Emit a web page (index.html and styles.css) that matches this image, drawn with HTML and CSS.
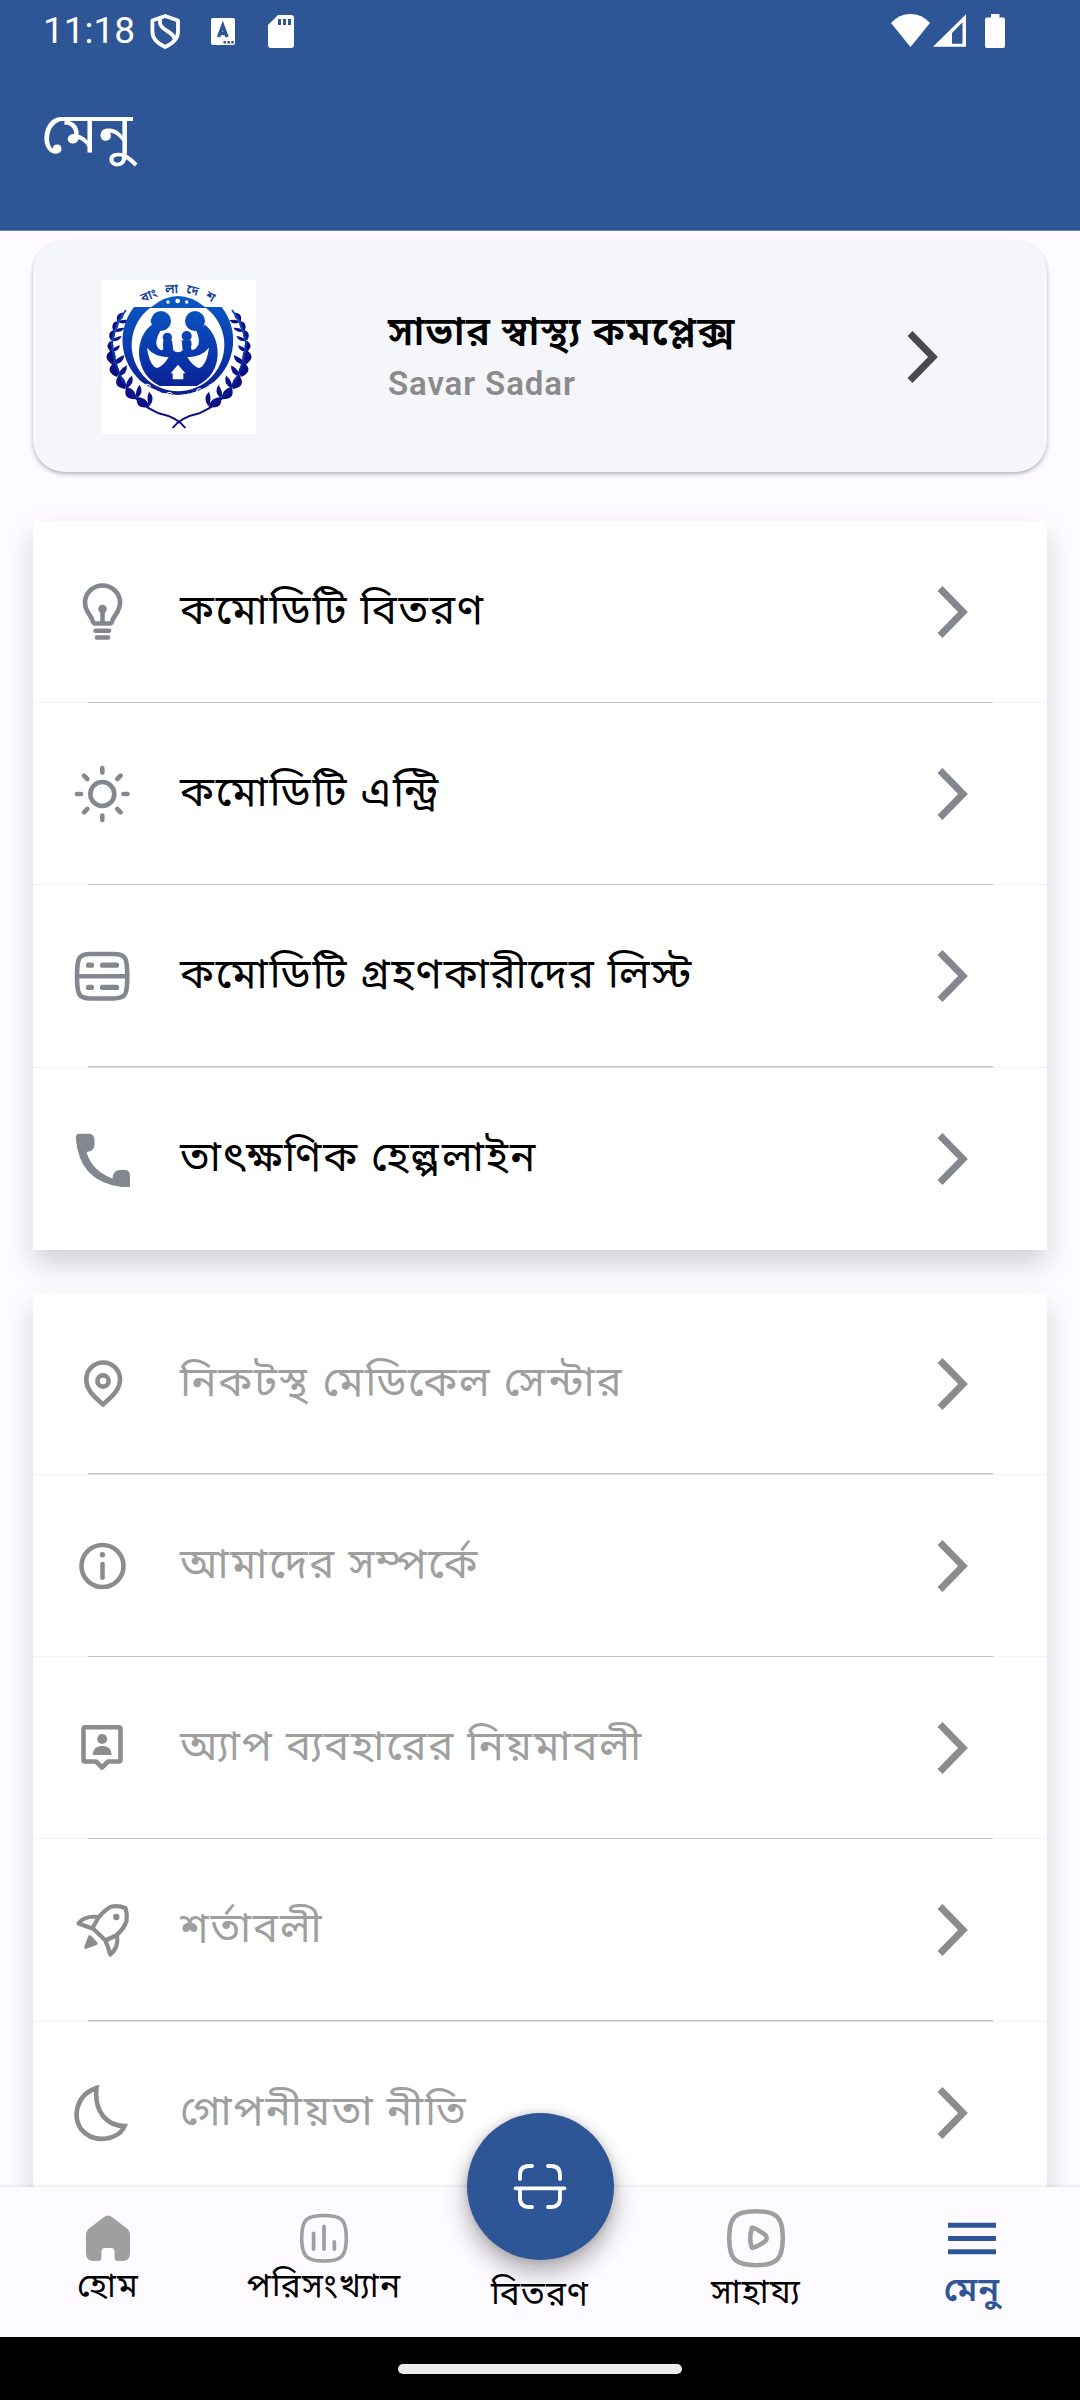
FILE: index.html
```html
<!DOCTYPE html>
<html lang="bn">
<head>
<meta charset="utf-8">
<title>মেনু</title>
<link rel="stylesheet" href="styles.css">
</head>
<body>
<div class="screen">
  <header class="top">
    <div class="status">
      <span class="clock">11:18</span>
      <svg class="status-left" width="150" height="40" viewBox="148 12 150 40">
        <path d="M165.200 16l12.800 4.500v11c0 7-6 12.500-12.800 15.500c-6.800-3-12.800-8.500-12.800-15.500v-11z" fill="none" stroke="#fff" stroke-width="3.800" stroke-linejoin="round"/>
        <path d="M160 19v4c0 7 14.500 9 14.500 16.500" fill="none" stroke="#fff" stroke-width="3.800"/>
        <rect x="211" y="18" width="24" height="27" rx="2" fill="#fff"/>
        <path d="M218.500 37l4.300-11.500l4.300 11.500M220 33.500h6" fill="none" stroke="#2e5596" stroke-width="3.400"/>
        <path d="M223.500 41h2.400v2.400h-2.400zM227.500 41h2.400v2.400h-2.400zM231.300 41h2.400v2.400h-2.400z" fill="#2e5596"/>
        <path d="M278 15h13a3 3 0 0 1 3 3v27a3 3 0 0 1-3 3h-20a3 3 0 0 1-3-3v-20z" fill="#fff"/>
        <path d="M278 19h3v6h-3zM283 19h3v6h-3zM288 19h3v6h-3z" fill="#2e5596"/>
      </svg>
      <svg class="status-right" width="120" height="40" viewBox="888 12 120 40">
        <path d="M891 23q8-9 19.500-9t19.500 9l-19.500 24z" fill="#fff"/>
        <path fill-rule="evenodd" d="M966 14.300v32.400h-33zM962.500 22.300l-10.500 10.700v10.700h10.500z" fill="#fff"/>
        <path d="M991 14h8.500v3.500h3.500a2 2 0 0 1 2 2v26.500a2 2 0 0 1-2 2h-16a2 2 0 0 1-2-2v-26.500a2 2 0 0 1 2-2h4z" fill="#fff"/>
      </svg>
    </div>
    <h1 class="page-title">মেনু</h1>
  </header>

  <main class="content">
    <section class="profile">
      <svg class="emblem" viewBox="36 30 462 462">
        <defs>
          <linearGradient id="ink" gradientUnits="userSpaceOnUse" x1="0" y1="50" x2="0" y2="440">
            <stop offset="0" stop-color="#0a5fc8"/><stop offset=".5" stop-color="#0a3aae"/><stop offset="1" stop-color="#0c0a80"/>
          </linearGradient>
          <path id="arcTop" d="M104 158A192 192 0 0 1 428 158"/>
          <path id="arcLow" d="M130 335Q264 442 396 335"/>
          <g id="sprig"><path d="M264 428q-32 26-44-12q26-12 44 12zM264 426q-18-12-20-38q26 8 20 38z"/></g>
          <g id="twig"><path d="M264 428q-20 16-32-3q16-14 32 3zM264 426q-14-8-18-26q20 4 18 26z"/></g>
          <g id="branch">
            <g transform="matrix(1.07 0 0 1 -18.500 0)">
              <use href="#sprig" transform="rotate(25 264 238)"/>
              <use href="#sprig" transform="rotate(38 264 238)"/>
              <use href="#sprig" transform="rotate(51 264 238)"/>
              <use href="#sprig" transform="rotate(64 264 238)"/>
              <use href="#sprig" transform="rotate(76 264 238)"/>
              <use href="#twig" transform="rotate(88 264 238)"/>
              <use href="#twig" transform="rotate(98 264 238)"/>
              <use href="#twig" transform="rotate(107 264 238)"/>
              <use href="#twig" transform="rotate(116 264 238)"/>
            </g>
            <path d="M286 474Q262 442 206 430Q82 376 66 220Q76 160 108 120" fill="none" stroke="url(#ink)" stroke-width="6"/>
          </g>
        </defs>
        <rect x="36" y="30" width="462" height="462" fill="#fff"/>
        <g fill="url(#ink)">
          <use href="#branch"/>
          <use href="#branch" transform="matrix(-1 0 0 1 534 0)"/>
          <path fill-rule="evenodd" d="M132 111h263a166 164 0 1 1-263 0zM180 114a139 139 0 1 0 168 0z"/>
          <path d="M184 111q80-66 161 0z"/>
          <circle cx="213" cy="153" r="30"/>
          <path d="M190 138l-9 16 8 8 10-4z"/>
          <circle cx="315" cy="153" r="30"/>
          <circle cx="232" cy="202" r="14"/>
          <circle cx="290" cy="198" r="15"/>
          <path d="M184 165q-38 32-37 86q4 66 62 97h111q62-32 63-97q0-54-37-86l-28 16q18 38 0 54q-20 14-13-12l-2-12h-28l3 30q-5 6-14 6t-14-6l-4-30h-26l-1 14q4 24-12 12q-18-16 5-56z"/>
        </g>
        <g fill="#fff">
          <path d="M171 233q8 56 31 61q18-6 34-32q-44-2-65-29zM357 233q-8 56-31 61q-18-6-34-32q44-2 65-29z"/>
          <path d="M264 284l22 26h-6v18h-32v-18h-6z"/>
          <circle cx="234" cy="96" r="5"/><circle cx="263" cy="93" r="7"/><circle cx="290" cy="96" r="5"/>
        </g>
        <text class="emblem-name"><textPath href="#arcTop" startOffset="52%">বাংলাদেশ</textPath></text>
        <text class="emblem-motto"><textPath href="#arcLow" startOffset="50%">পরিবার পরিকল্পনা অধিদপ্তর</textPath></text>
      </svg>
      <div class="profile-text">
        <div class="profile-name">সাভার স্বাস্থ্য কমপ্লেক্স</div>
        <div class="profile-place">Savar Sadar</div>
      </div>
      <svg class="chevron" width="32" height="54" viewBox="0 0 32 54"><path d="M4 3.500L27 27L4 50.500"/></svg>
    </section>

    <section class="list primary">
      <div class="row">
        <svg class="icon" viewBox="0 0 60 60"><path d="M23 41.500c-1.500 0-2-1-2.500-3C19 33 13 30 13 20.500A17.500 17 0 0 1 48 20.500C48 30 42 33 40.500 38.500c-.5 2-1 3-2.500 3z"/><path d="M30.500 27v14"/><circle class="solid" cx="30.500" cy="27" r="4.300"/><path d="M23.500 48.700h13.500M25 55.500h11"/></svg>
        <span class="label">কমোডিটি বিতরণ</span>
        <svg class="chevron" width="32" height="54" viewBox="0 0 32 54"><path d="M4 3.500L27 27L4 50.500"/></svg>
      </div>
      <div class="row">
        <svg class="icon" viewBox="0 0 60 60"><circle cx="30.300" cy="30" r="12"/><path d="M30.300 4v4.500M30.300 51.500v4.500M5 30h4M51.500 30h4M12 11.700l3.300 3.300M45.300 45l3.300 3.300M48.600 11.700l-3.300 3.300M15.300 45l-3.300 3.300"/></svg>
        <span class="label">কমোডিটি এন্ট্রি</span>
        <svg class="chevron" width="32" height="54" viewBox="0 0 32 54"><path d="M4 3.500L27 27L4 50.500"/></svg>
      </div>
      <div class="row">
        <svg class="icon" viewBox="0 0 60 60"><path d="M5 30.300C5 12 6.500 8 19 8H41.500C54 8 55.300 12 55.300 30.300C55.300 48.500 54 52.500 41.500 52.500H19C6.500 52.500 5 48.500 5 30.300zM5 30.300h50.300"/><path class="dash" d="M16.500 19.200h3M30.500 19.200h14M16.500 41.400h3M30.500 41.400h14"/></svg>
        <span class="label">কমোডিটি গ্রহণকারীদের লিস্ট</span>
        <svg class="chevron" width="32" height="54" viewBox="0 0 32 54"><path d="M4 3.500L27 27L4 50.500"/></svg>
      </div>
      <div class="row">
        <svg class="icon" viewBox="0 0 60 60"><path class="solid" d="M7.500 4.700H17Q22.500 5 22.500 11V16Q22.500 22 14.500 23Q20 42 40.500 49.500Q41 41 48 41H52.500Q58 41 58 46.500V58H50Q7 53 3.800 9Q3.800 4.700 7.500 4.700z"/></svg>
        <span class="label">তাৎক্ষণিক হেল্পলাইন</span>
        <svg class="chevron" width="32" height="54" viewBox="0 0 32 54"><path d="M4 3.500L27 27L4 50.500"/></svg>
      </div>
    </section>

    <section class="list secondary">
      <div class="row">
        <svg class="icon" viewBox="0 0 60 60"><path d="M31 50.500C24 44 14.300 37 14.300 25.500A16.800 17 0 0 1 48 25.500C48 37 38 44 31 50.500z"/><circle cx="31" cy="27" r="5.600"/></svg>
        <span class="label">নিকটস্থ মেডিকেল সেন্টার</span>
        <svg class="chevron" width="32" height="54" viewBox="0 0 32 54"><path d="M4 3.500L27 27L4 50.500"/></svg>
      </div>
      <div class="row">
        <svg class="icon" viewBox="0 0 60 60"><circle cx="30.500" cy="30" r="21"/><circle class="solid" cx="30.500" cy="18.800" r="2.700"/><path d="M30.500 28v13.700"/></svg>
        <span class="label">আমাদের সম্পর্কে</span>
        <svg class="chevron" width="32" height="54" viewBox="0 0 32 54"><path d="M4 3.500L27 27L4 50.500"/></svg>
      </div>
      <div class="row">
        <svg class="icon" viewBox="0 0 60 60"><path stroke-linejoin="miter" d="M13 9.300H47a1.500 1.500 0 0 1 1.500 1.500V42a1.500 1.500 0 0 1-1.500 1.500H36L30 49.500L24 43.500H13a1.500 1.500 0 0 1-1.500-1.500V10.800a1.500 1.500 0 0 1 1.500-1.500z"/><circle class="solid" cx="30.200" cy="21" r="5"/><path class="solid" d="M20.700 37Q21 28 30.200 28T39.700 37z"/></svg>
        <span class="label">অ্যাপ ব্যবহারের নিয়মাবলী</span>
        <svg class="chevron" width="32" height="54" viewBox="0 0 32 54"><path d="M4 3.500L27 27L4 50.500"/></svg>
      </div>
      <div class="row">
        <svg class="icon rocket" viewBox="0 0 60 60"><path d="M20.500 28L26.500 17.500Q34 9 39 6.700Q46 5 53.500 8Q55.500 14 54.500 21Q52 29 44 35.500L33.500 40.500zM26.500 17Q12 15.500 6.500 23.500L20.500 28.500M33.500 41Q36 46 38.200 54.500Q47 48 45 35"/><circle class="solid" cx="44.300" cy="17" r="3.200"/><path class="solid" d="M16.500 35.500Q18.500 34.500 20 36.500L25.500 42.700Q26 44 24.500 45L13.500 49Q12 49 12.200 47z"/></svg>
        <span class="label">শর্তাবলী</span>
        <svg class="chevron" width="32" height="54" viewBox="0 0 32 54"><path d="M4 3.500L27 27L4 50.500"/></svg>
      </div>
      <div class="row">
        <svg class="icon moon" viewBox="0 0 60 60"><path d="M24.500 5C4 12 .5 33 9 46C21 61 46 58 52.500 43C35 43 22 29 24.500 5z"/></svg>
        <span class="label">গোপনীয়তা নীতি</span>
        <svg class="chevron" width="32" height="54" viewBox="0 0 32 54"><path d="M4 3.500L27 27L4 50.500"/></svg>
      </div>
    </section>
  </main>

  <nav class="tabs">
    <div class="tab">
      <svg class="tab-icon" viewBox="0 0 60 60"><path fill="#9f9f9f" d="M25.500 9.500q4.500-4.200 9 0l14.500 11q3 2.500 3 6.500v18q0 8-7.500 8H40q-3.500 0-3.500-3.500v-6q0-3.500-3.500-3.500h-6q-3.500 0-3.500 3.500v6q0 3.500-3.500 3.500h-4.500q-7.500 0-7.500-8V27q0-4 3-6.500z"/></svg>
      <span class="tab-label raise">হোম</span>
    </div>
    <div class="tab">
      <svg class="tab-icon" viewBox="0 0 60 60"><path class="line" stroke-width="3.600" d="M30 7.500C48 7.500 52.300 12 52.300 30S48 53 30 53S7.700 48 7.700 30S12 7.500 30 7.500z"/><path class="line" stroke-width="3.800" d="M19.600 25.500v15.500M30 18.500v22.500M40.300 34v7"/></svg>
      <span class="tab-label raise">পরিসংখ্যান</span>
    </div>
    <div class="tab">
      <div class="tab-icon"></div>
      <span class="tab-label drop">বিতরণ</span>
    </div>
    <div class="tab">
      <svg class="tab-icon" viewBox="0 0 60 60"><path class="line" stroke-width="4.600" d="M30 3.300C51 3.300 56.800 9 56.800 30S51 57.200 30 57.200S3.200 51 3.200 30S9 3.300 30 3.300z"/><path class="line" stroke-width="4.600" d="M26 19.500q3 .3 13 7.200q3.500 3.300 0 6.600q-9 6.500-13 6.500q-3.500-8 0-20.300z"/></svg>
      <span class="tab-label">সাহায্য</span>
    </div>
    <div class="tab">
      <svg class="tab-icon" viewBox="0 0 60 60"><path d="M6 17.300h48M6 30.500h48M6 43.700h48" stroke="#2e5596" stroke-width="5"/></svg>
      <span class="tab-label active">মেনু</span>
    </div>
    <div class="fab">
      <svg width="60" height="60" viewBox="510 2157 60 60"><path d="M520 2179v-4q0-9 9-9h3M548 2166h3q9 0 9 9v4M520 2190v8q0 9 9 9h3M548 2207h3q9 0 9-9v-8M515.500 2188.300h49"/></svg>
    </div>
  </nav>
  <div class="gesture"><div class="pill"></div></div>
</div>
</body>
</html>
```
FILE: styles.css
```css
* { box-sizing: border-box; }

body {
  margin: 0;
  background: #fdfbff;
  font-family: Roboto, "Noto Sans Bengali", "Noto Sans", sans-serif;
}

.screen {
  width: 1080px;
  height: 2400px;
  display: flex;
  flex-direction: column;
  overflow: hidden;
}

.top {
  height: 231px;
  flex: none;
  background: #2e5596;
  color: #fff;
  border-bottom: 1px solid #6480b5;
}

.status {
  height: 64px;
  display: flex;
  align-items: flex-start;
  padding: 12px 72px 0 43px;
}

.clock {
  width: 105px;
  font-size: 37px;
  line-height: 38px;
}

.status-right { margin-left: auto; }

.page-title {
  margin: 25px 0 0 41px;
  font-size: 58px;
  line-height: 88px;
  font-weight: 400;
}

.content {
  height: 1956px;
  flex: none;
  padding: 10px 33px 0;
  overflow: hidden;
}

.profile {
  height: 231px;
  display: flex;
  align-items: center;
  padding: 0 109px 0 69px;
  border-radius: 32px;
  background: #f5f6fa;
  box-shadow: 0 2px 4px rgba(0, 0, 0, .3);
}

.emblem { width: 154px; height: 154px; flex: none; }

.emblem-name {
  font-size: 38px;
  font-weight: 600;
  letter-spacing: 22px;
  text-anchor: middle;
  fill: #123a9c;
}
.emblem-motto {
  font-size: 22px;
  font-weight: 700;
  text-anchor: middle;
  fill: #fff;
}

.profile-text { margin: 2px 0 0 132px; flex: 1; }

.profile-name {
  font-size: 40px;
  line-height: 52px;
  font-weight: 600;
  letter-spacing: 1.100px;
  color: #000;
  white-space: nowrap;
}

.profile-place {
  font-size: 33px;
  line-height: 51px;
  font-weight: 600;
  letter-spacing: .9px;
  color: #8b8b8b;
}

.chevron { flex: none; }
.chevron path { fill: none; stroke: #474a53; stroke-width: 7; }

.list {
  background: #fff;
  box-shadow: 0 14px 26px rgba(0, 0, 0, .17);
}

.primary { margin-top: 49px; }
.secondary { margin-top: 43px; }

.row {
  height: 182.200px;
  display: flex;
  align-items: center;
  padding: 0 79px 0 39px;
  background:
    linear-gradient(#c4c4c6, #c4c4c6) 55px 100% / 905px 1.500px no-repeat,
    linear-gradient(#f3f3f7, #f3f3f7) 0 100% / 100% 1px no-repeat;
}

.row:last-child { background: none; }

.icon { width: 60px; height: 60px; flex: none; }
.icon path, .icon circle {
  fill: none;
  stroke: #838790;
  stroke-width: 4.600;
  stroke-linecap: round;
  stroke-linejoin: round;
}
.icon .dash { stroke-width: 5.200; }
.icon.rocket path { stroke-width: 4.200; }
.icon.moon path { stroke-linejoin: miter; }
.icon .solid { fill: #838790; stroke: none; }
.secondary .icon path, .secondary .icon circle { stroke: #8c8c8c; }
.secondary .icon .solid { fill: #8c8c8c; stroke: none; }

.primary .chevron path { stroke: #84878e; }
.secondary .chevron path { stroke: #8c8c8c; }

.label {
  flex: 1;
  margin: -4px 0 0 48px;
  font-size: 42px;
  line-height: 60px;
  letter-spacing: 1.800px;
  color: #000;
  white-space: nowrap;
}
.secondary .label { color: #9f9f9f; }

.tabs {
  position: relative;
  height: 150px;
  flex: none;
  display: flex;
  background: #fdfbff;
  box-shadow: 0 -1px 3px rgba(0, 0, 0, .1);
}

.tab {
  width: 216px;
  padding-top: 21px;
  display: flex;
  flex-direction: column;
  align-items: center;
}

.tab-icon { width: 60px; height: 60px; flex: none; }
.tab-icon .line { fill: none; stroke: #9f9f9f; stroke-linecap: round; stroke-linejoin: round; }

.tab-label {
  font-size: 33.500px;
  line-height: 48px;
  letter-spacing: 1.200px;
  color: #000;
  white-space: nowrap;
}
.raise { margin-top: -6px; }
.drop { margin-top: 2px; }
.active { margin-top: -2px; color: #2e5596; font-weight: 600; }

.fab {
  position: absolute;
  left: 466.500px;
  top: -74px;
  width: 147px;
  height: 147px;
  display: flex;
  align-items: center;
  justify-content: center;
  border-radius: 50%;
  background: #2e5596;
  box-shadow: 0 12px 24px rgba(0, 0, 0, .32), 0 0 8px rgba(0, 0, 0, .15);
}
.fab path { fill: none; stroke: #fff; stroke-width: 3.800; stroke-linecap: round; }

.gesture {
  height: 63px;
  flex: none;
  display: flex;
  align-items: center;
  justify-content: center;
  background: #000;
}
.pill { width: 284px; height: 10px; border-radius: 5px; background: #ebebeb; }
```
